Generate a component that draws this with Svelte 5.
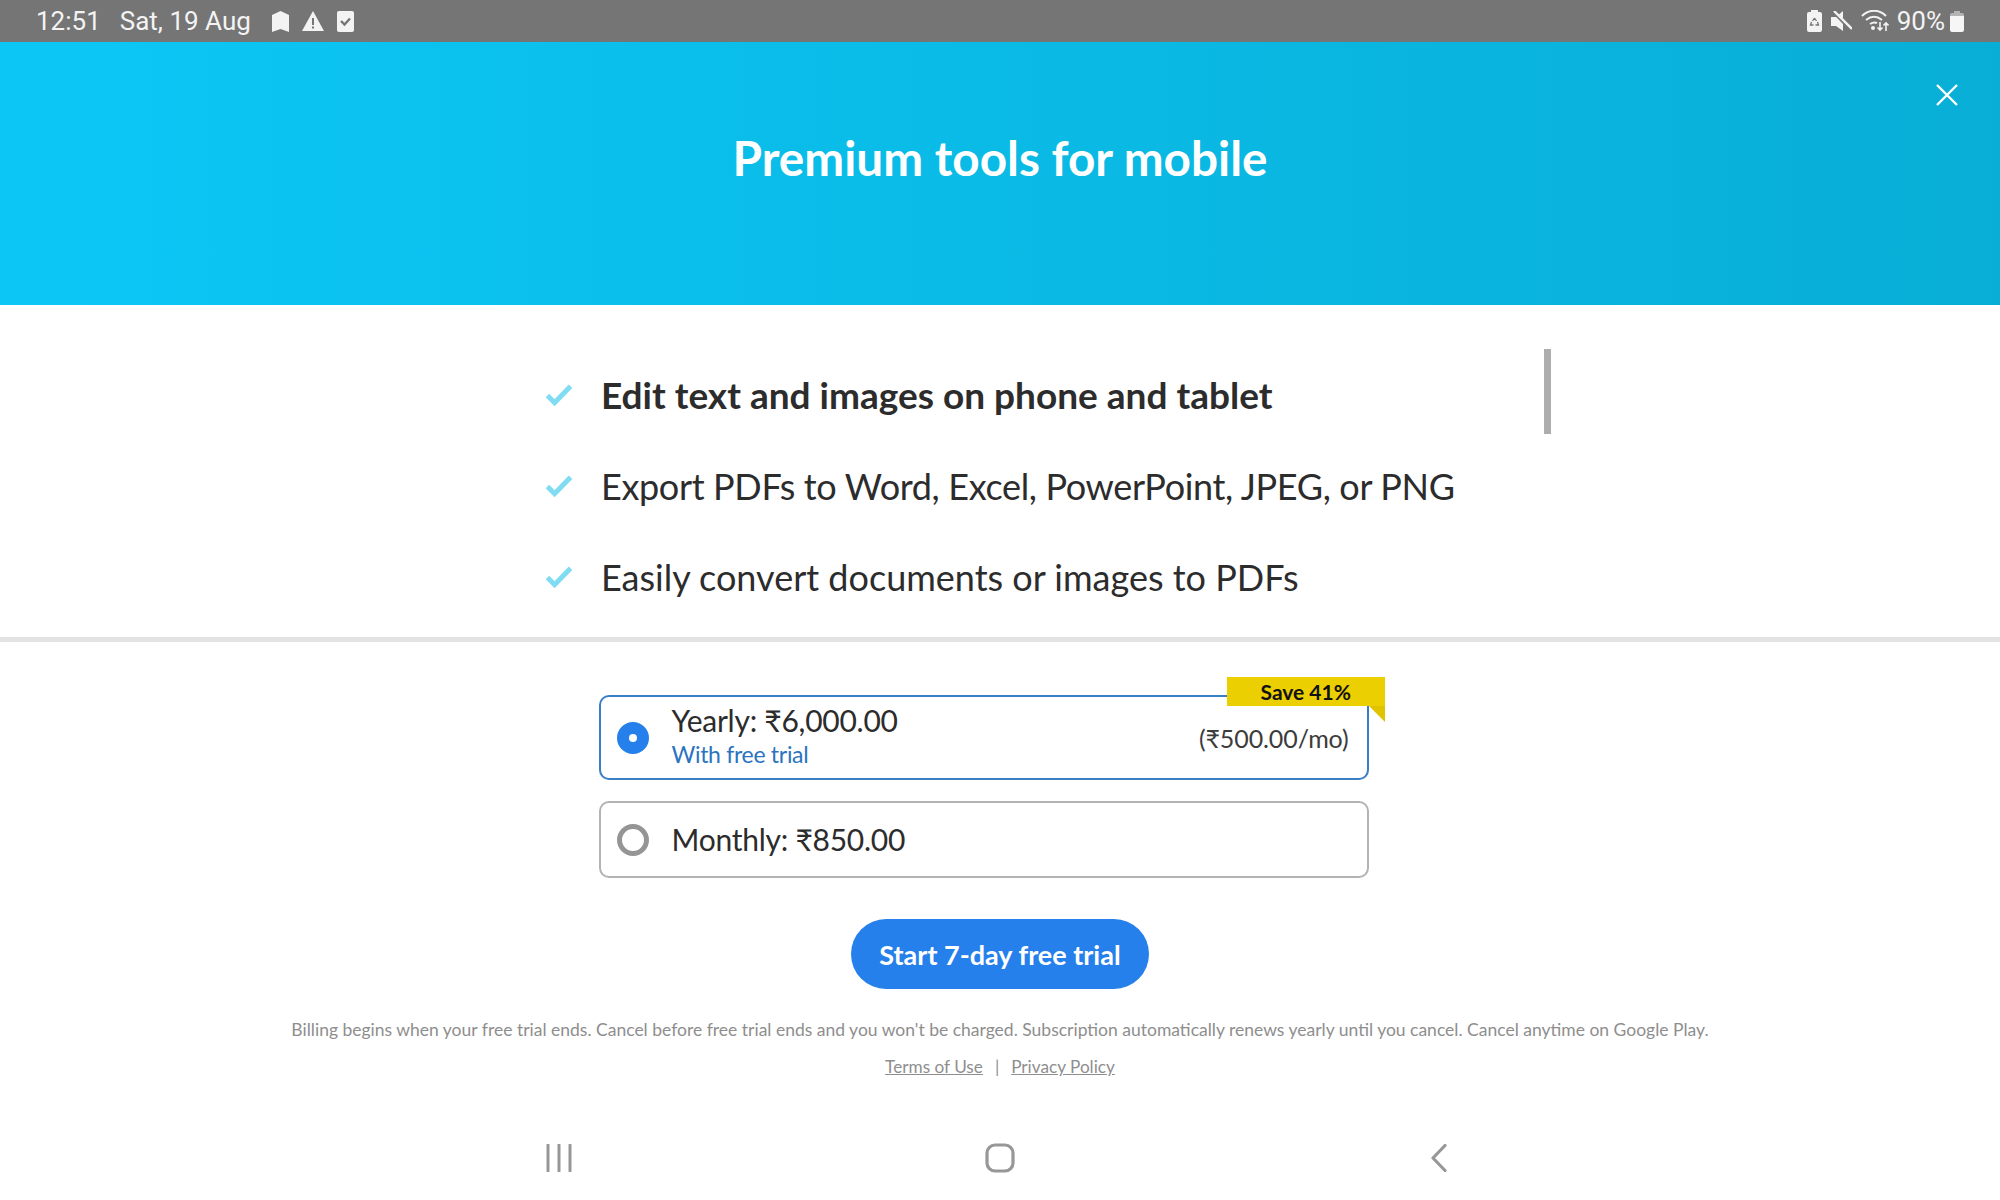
<script lang="ts">
  const features = [
    { text: "Edit text and images on phone and tablet", strong: true, wide: false },
    { text: "Export PDFs to Word, Excel, PowerPoint, JPEG, or PNG", strong: false, wide: false },
    { text: "Easily convert documents or images to PDFs", strong: false, wide: true },
  ];
</script>

<div class="screen">
  <div class="status">
    <div class="status-left">
      <span class="time">12:51</span>
      <span class="date">Sat, 19 Aug</span>
      <svg class="ic first" width="17" height="21" viewBox="0 0 17 21"><path d="M0 4 8.500 0 17 4v17l-8.500-3L0 21Z" fill="#f3f3f3" /></svg>
      <svg class="ic" width="22" height="20" viewBox="0 0 22 20"><path d="M11 0 22 20H0Z" fill="#f3f3f3" /><path d="M10 7h2v7h-2zm0 8.500h2v2h-2z" fill="#757575" /></svg>
      <svg class="ic" width="17" height="21" viewBox="0 0 17 21"><rect width="17" height="21" rx="2" fill="#f3f3f3" /><path d="m4 10 3.500 3.500L13 7.500" fill="none" stroke="#757575" stroke-width="2.400" /></svg>
    </div>
    <div class="status-right">
      <svg width="15" height="22" viewBox="0 0 15 22"><path d="M4 0h7v2h2a2 2 0 0 1 2 2v16a2 2 0 0 1-2 2H2a2 2 0 0 1-2-2V4a2 2 0 0 1 2-2h2Z" fill="#f3f3f3" /><path d="m7.500 8 2 3m1 1 1 3H8.500m-2 0H3.500l1-3m1-1 2-3" fill="none" stroke="#757575" stroke-width="1.300" /></svg>
      <svg width="21" height="21" viewBox="0 0 21 21"><path d="M0 6h5l7-6v20l-7-5H0Z" fill="#f3f3f3" /><path d="M2 0 21 20" stroke="#757575" stroke-width="3.500" /><path d="M3 0 21 18" stroke="#f3f3f3" stroke-width="2.400" /></svg>
      <svg width="28" height="22" viewBox="0 0 28 22"><g fill="none" stroke="#f3f3f3" stroke-width="2"><path d="M1 6c7-7 17-7 24 0" /><path d="M5 10c5-4 11-4 16 0" /><path d="M9 14c3-2 5-2 7-1" /></g><circle cx="12" cy="18" r="2" fill="#f3f3f3" /><path d="M19 12v8m-2.500-2.500L19 20l2.500-2.500M25 21v-8m-2.500 2.500L25 13l2.500 2.500" fill="none" stroke="#f3f3f3" stroke-width="1.600" /></svg>
      <span class="pct">90%</span>
      <svg class="batt" width="14" height="21" viewBox="0 0 14 21"><path d="M4 0h6v2h2a2 2 0 0 1 2 2v3H0V4a2 2 0 0 1 2-2h2Z" fill="#b4b4b4" /><path d="M0 5h14v14a2 2 0 0 1-2 2H2a2 2 0 0 1-2-2Z" fill="#f6f6f6" /></svg>
    </div>
  </div>

  <header class="hero">
    <h1>Premium tools for mobile</h1>
    <svg class="close" width="22" height="22" viewBox="0 0 22 22"><path d="M1 1 21 21M21 1 1 21" stroke="#fff" stroke-width="2.400" /></svg>
  </header>

  <section class="features">
    <ul>
      {#each features as f}
        <li class:strong={f.strong} class:wide={f.wide}>
          <svg width="28" height="22" viewBox="0 0 25 20"><path d="M2 10.500 8.500 17 23 2" fill="none" stroke="#7fdcf3" stroke-width="4.500" /></svg>
          <span>{f.text}</span>
        </li>
      {/each}
    </ul>
    <div class="thumb"></div>
  </section>

  <section class="plans">
    <div class="plan selected">
      <span class="radio on"></span>
      <div class="plan-text">
        <span class="price">Yearly: ₹6,000.00</span>
        <span class="note">With free trial</span>
      </div>
      <span class="permonth">(₹500.00/mo)</span>
      <span class="badge">Save 41%</span>
      <span class="fold"></span>
    </div>
    <div class="plan monthly">
      <span class="radio"></span>
      <span class="price">Monthly: ₹850.00</span>
    </div>

    <button class="cta" type="button">Start 7-day free trial</button>

    <p class="fine">Billing begins when your free trial ends. Cancel before free trial ends and you won't be charged. Subscription automatically renews yearly until you cancel. Cancel anytime on Google Play.</p>
    <p class="links"><a href="#terms">Terms of Use</a><span class="sep">|</span><a href="#privacy">Privacy Policy</a></p>
  </section>

  <nav class="navbar">
    <svg width="28" height="28" viewBox="0 0 28 28"><path d="M3 1v26M14 1v26M25 1v26" stroke="#979797" stroke-width="3" stroke-linecap="round" /></svg>
    <svg width="30" height="30" viewBox="0 0 30 30"><rect x="2" y="2" width="26" height="26" rx="8" fill="none" stroke="#979797" stroke-width="3.200" /></svg>
    <svg class="back" width="18" height="28" viewBox="0 0 18 28"><path d="M15 1.500 3 14l12 12.500" fill="none" stroke="#979797" stroke-width="3.200" stroke-linecap="round" stroke-linejoin="round" /></svg>
  </nav>
</div>

<style>
  :global(body) {
    margin: 0;
    background: #fff;
  }

  .screen {
    width: 2000px;
    height: 1200px;
    display: flex;
    flex-direction: column;
    overflow: hidden;
    font-family: "Lato", "Noto Sans", sans-serif;
    color: #2c2c2c;
  }

  .status {
    height: 42px;
    flex: none;
    background: #757575;
    color: #f3f3f3;
    display: flex;
    align-items: center;
    justify-content: space-between;
    padding: 0 32px 0 36px;
    font-family: "Roboto", sans-serif;
    font-size: 26px;
  }

  .status-left,
  .status-right {
    display: flex;
    align-items: center;
  }

  .date {
    margin-left: 19px;
  }

  .ic {
    margin-left: 13px;
  }

  .ic.first {
    margin-left: 21px;
  }

  .status-right {
    gap: 9px;
  }

  .pct {
    margin-left: -1px;
  }

  .batt {
    margin: 0 4px 0 -4px;
  }

  .hero {
    height: 263px;
    flex: none;
    position: relative;
    background: linear-gradient(90deg, #0cc7f6 0%, #08aed6 100%);
    display: flex;
    justify-content: center;
  }

  h1 {
    margin: 87px 0 0;
    font-size: 47.700px;
    line-height: 58px;
    font-weight: 700;
    color: #fff;
  }

  .close {
    position: absolute;
    right: 42px;
    top: 42px;
  }

  .features {
    height: 337px;
    flex: none;
    box-sizing: border-box;
    border-bottom: 5px solid #e3e3e3;
    position: relative;
  }

  ul {
    list-style: none;
    margin: 0;
    padding: 68px 0 0 545px;
    display: flex;
    flex-direction: column;
    gap: 47px;
  }

  li {
    display: flex;
    align-items: center;
    height: 44px;
    font-size: 36px;
    letter-spacing: -0.35px;
    line-height: 44px;
    color: #2c2c2c;
  }

  li svg {
    margin-right: 28px;
  }

  li.wide {
    letter-spacing: 0;
  }

  li.strong {
    font-size: 37px;
    letter-spacing: 0;
    font-weight: 700;
  }

  .thumb {
    position: absolute;
    left: 1544px;
    top: 44px;
    width: 7px;
    height: 85px;
    background: #adadad;
  }

  .plans {
    flex: 1;
    display: flex;
    flex-direction: column;
    align-items: center;
    padding-top: 53px;
  }

  .plan {
    width: 770px;
    margin-left: -33px;
    box-sizing: border-box;
    border: 2.500px solid #b3b3b3;
    border-radius: 10px;
    display: flex;
    align-items: center;
    padding: 0 18px 0 16px;
    position: relative;
  }

  .plan.selected {
    height: 85px;
    border-color: #3a7fc4;
  }

  .plan.monthly {
    height: 77px;
    margin-top: 21px;
  }

  .radio {
    width: 32px;
    height: 32px;
    flex: none;
    box-sizing: border-box;
    border: 5.500px solid #959595;
    border-radius: 50%;
    margin-right: 23px;
  }

  .radio.on {
    border: 12px solid #2680eb;
    background: #fff;
  }

  .plan-text {
    display: flex;
    flex-direction: column;
    margin-top: -2px;
  }

  .plan-text .price {
    line-height: 35px;
  }

  .price {
    font-size: 30px;
    letter-spacing: -0.25px;
    line-height: 37px;
  }

  .note {
    font-size: 23px;
    letter-spacing: -0.3px;
    line-height: 33px;
    color: #2b73bf;
  }

  .permonth {
    margin-left: auto;
    font-size: 25px;
    letter-spacing: -0.1px;
    color: #3c3c3c;
  }

  .badge {
    position: absolute;
    top: -20px;
    right: -18px;
    width: 158px;
    height: 29px;
    padding-left: 34px;
    box-sizing: border-box;
    background: #eccf00;
    color: #111;
    font-size: 21px;
    font-weight: 700;
    line-height: 30px;
  }

  .fold {
    position: absolute;
    top: 9px;
    right: -18px;
    border-top: 16px solid #e0c400;
    border-left: 16px solid transparent;
  }

  .cta {
    margin-top: 41px;
    width: 298px;
    height: 70px;
    border: 0;
    border-radius: 35px;
    background: #2680eb;
    color: #fff;
    font-family: inherit;
    font-size: 27px;
    font-weight: 700;
  }

  .fine {
    margin: 29px 0 0;
    font-size: 17.500px;
    line-height: 24px;
    color: #8e8e8e;
  }

  .links {
    margin: 13px 0 0;
    font-size: 17.200px;
    line-height: 24px;
    color: #8e8e8e;
  }

  .links a {
    color: #8e8e8e;
    text-decoration: underline;
  }

  .sep {
    margin: 0 12px;
  }

  .navbar {
    height: 84px;
    flex: none;
    box-sizing: border-box;
    padding-right: 8px;
    display: flex;
    align-items: center;
    justify-content: center;
    gap: 412px;
  }

  .back {
    margin-left: 3px;
  }
</style>
